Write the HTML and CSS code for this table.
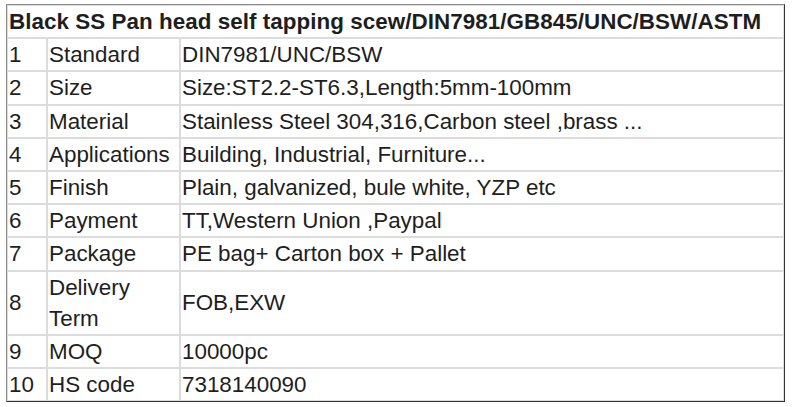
FILE: index.html
```html
<!DOCTYPE html>
<html>
<head>
<meta charset="utf-8">
<link rel="stylesheet" href="styles.css">
</head>
<body>
<table class="spec">
<colgroup><col class="c-no"><col class="c-key"><col class="c-val"></colgroup>
<tr><td class="title" colspan="3">Black SS Pan head self tapping scew/DIN7981/GB845/UNC/BSW/ASTM</td></tr>
<tr><td>1</td><td>Standard</td><td>DIN7981/UNC/BSW</td></tr>
<tr><td>2</td><td>Size</td><td>Size:ST2.2-ST6.3,Length:5mm-100mm</td></tr>
<tr><td>3</td><td>Material</td><td>Stainless Steel 304,316,Carbon steel ,brass ...</td></tr>
<tr><td>4</td><td>Applications</td><td>Building, Industrial, Furniture...</td></tr>
<tr><td>5</td><td>Finish</td><td>Plain, galvanized, bule white, YZP etc</td></tr>
<tr><td>6</td><td>Payment</td><td>TT,Western Union ,Paypal</td></tr>
<tr><td>7</td><td>Package</td><td>PE bag+ Carton box + Pallet</td></tr>
<tr><td>8</td><td>Delivery Term</td><td>FOB,EXW</td></tr>
<tr><td>9</td><td>MOQ</td><td>10000pc</td></tr>
<tr><td>10</td><td>HS code</td><td>7318140090</td></tr>
</table>
</body>
</html>
```
FILE: styles.css
```css
html, body {
  margin: 0;
  background: #fff;
}
body {
  padding: 4px 6px;
}
.spec {
  width: 779px;
  table-layout: fixed;
  border-collapse: separate;
  border-spacing: 0;
  border-style: solid;
  border-width: 1px;
  border-color: #8a8a8a #333 #333 #8a8a8a;
  font-family: "Liberation Sans", Arial, sans-serif;
  font-size: 22.4px;
  line-height: 31.2px;
  color: #1e1e1e;
}
.c-no { width: 40px; }
.c-key { width: 133px; }
.spec td {
  box-sizing: border-box;
  border: 1px solid #dcdcdc;
  padding: 0 1px;
  vertical-align: middle;
  white-space: normal;
}
.spec td.title {
  font-weight: bold;
  padding-left: 1px;
  letter-spacing: 0.05px;
}
```
